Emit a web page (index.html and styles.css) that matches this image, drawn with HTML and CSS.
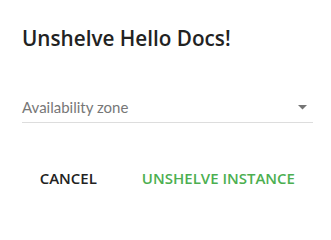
FILE: index.html
```html
<!DOCTYPE html>
<html>
<head>
<meta charset="utf-8">
<link rel="stylesheet" href="styles.css">
</head>
<body>
<div class="dialog">
  <h2 class="title">Unshelve Hello Docs!</h2>
  <div class="field">
    <span class="placeholder">Availability zone</span>
    <svg class="arrow" width="9" height="5" viewBox="0 0 9 5"><path d="M0 0 L9 0 L4.5 4.5 Z" fill="#757575"/></svg>
  </div>
  <div class="actions">
    <button class="btn btn-cancel">CANCEL</button>
    <button class="btn btn-primary">UNSHELVE INSTANCE</button>
  </div>
</div>
</body>
</html>
```
FILE: styles.css
```css
html, body {
  margin: 0;
  padding: 0;
  background: #fff;
}
.dialog {
  font-family: "Open Sans", Lato, sans-serif;
  padding: 26px 18px 0 22px;
}
.title {
  margin: 0;
  font-size: 20.7px;
  font-weight: 600;
  line-height: 24px;
  color: #222;
}
.field {
  margin-top: 42px;
  display: flex;
  align-items: center;
  justify-content: space-between;
  height: 30px;
  border-bottom: 1px solid #ddd;
}
.placeholder {
  font-family: Lato, sans-serif;
  font-size: 15px;
  line-height: 18px;
  color: #777;
}
.arrow {
  margin-right: 6px;
}
.actions {
  display: flex;
  justify-content: flex-end;
  margin-top: 41px;
  gap: 13px;
  padding-right: 2px;
}
.btn {
  background: none;
  border: 0;
  font-family: inherit;
  font-size: 15px;
  font-weight: 600;
  line-height: 20px;
  padding: 4px 16px;
  cursor: pointer;
}
.btn-cancel {
  color: #222;
}
.btn-primary {
  color: #4caf50;
}
```
